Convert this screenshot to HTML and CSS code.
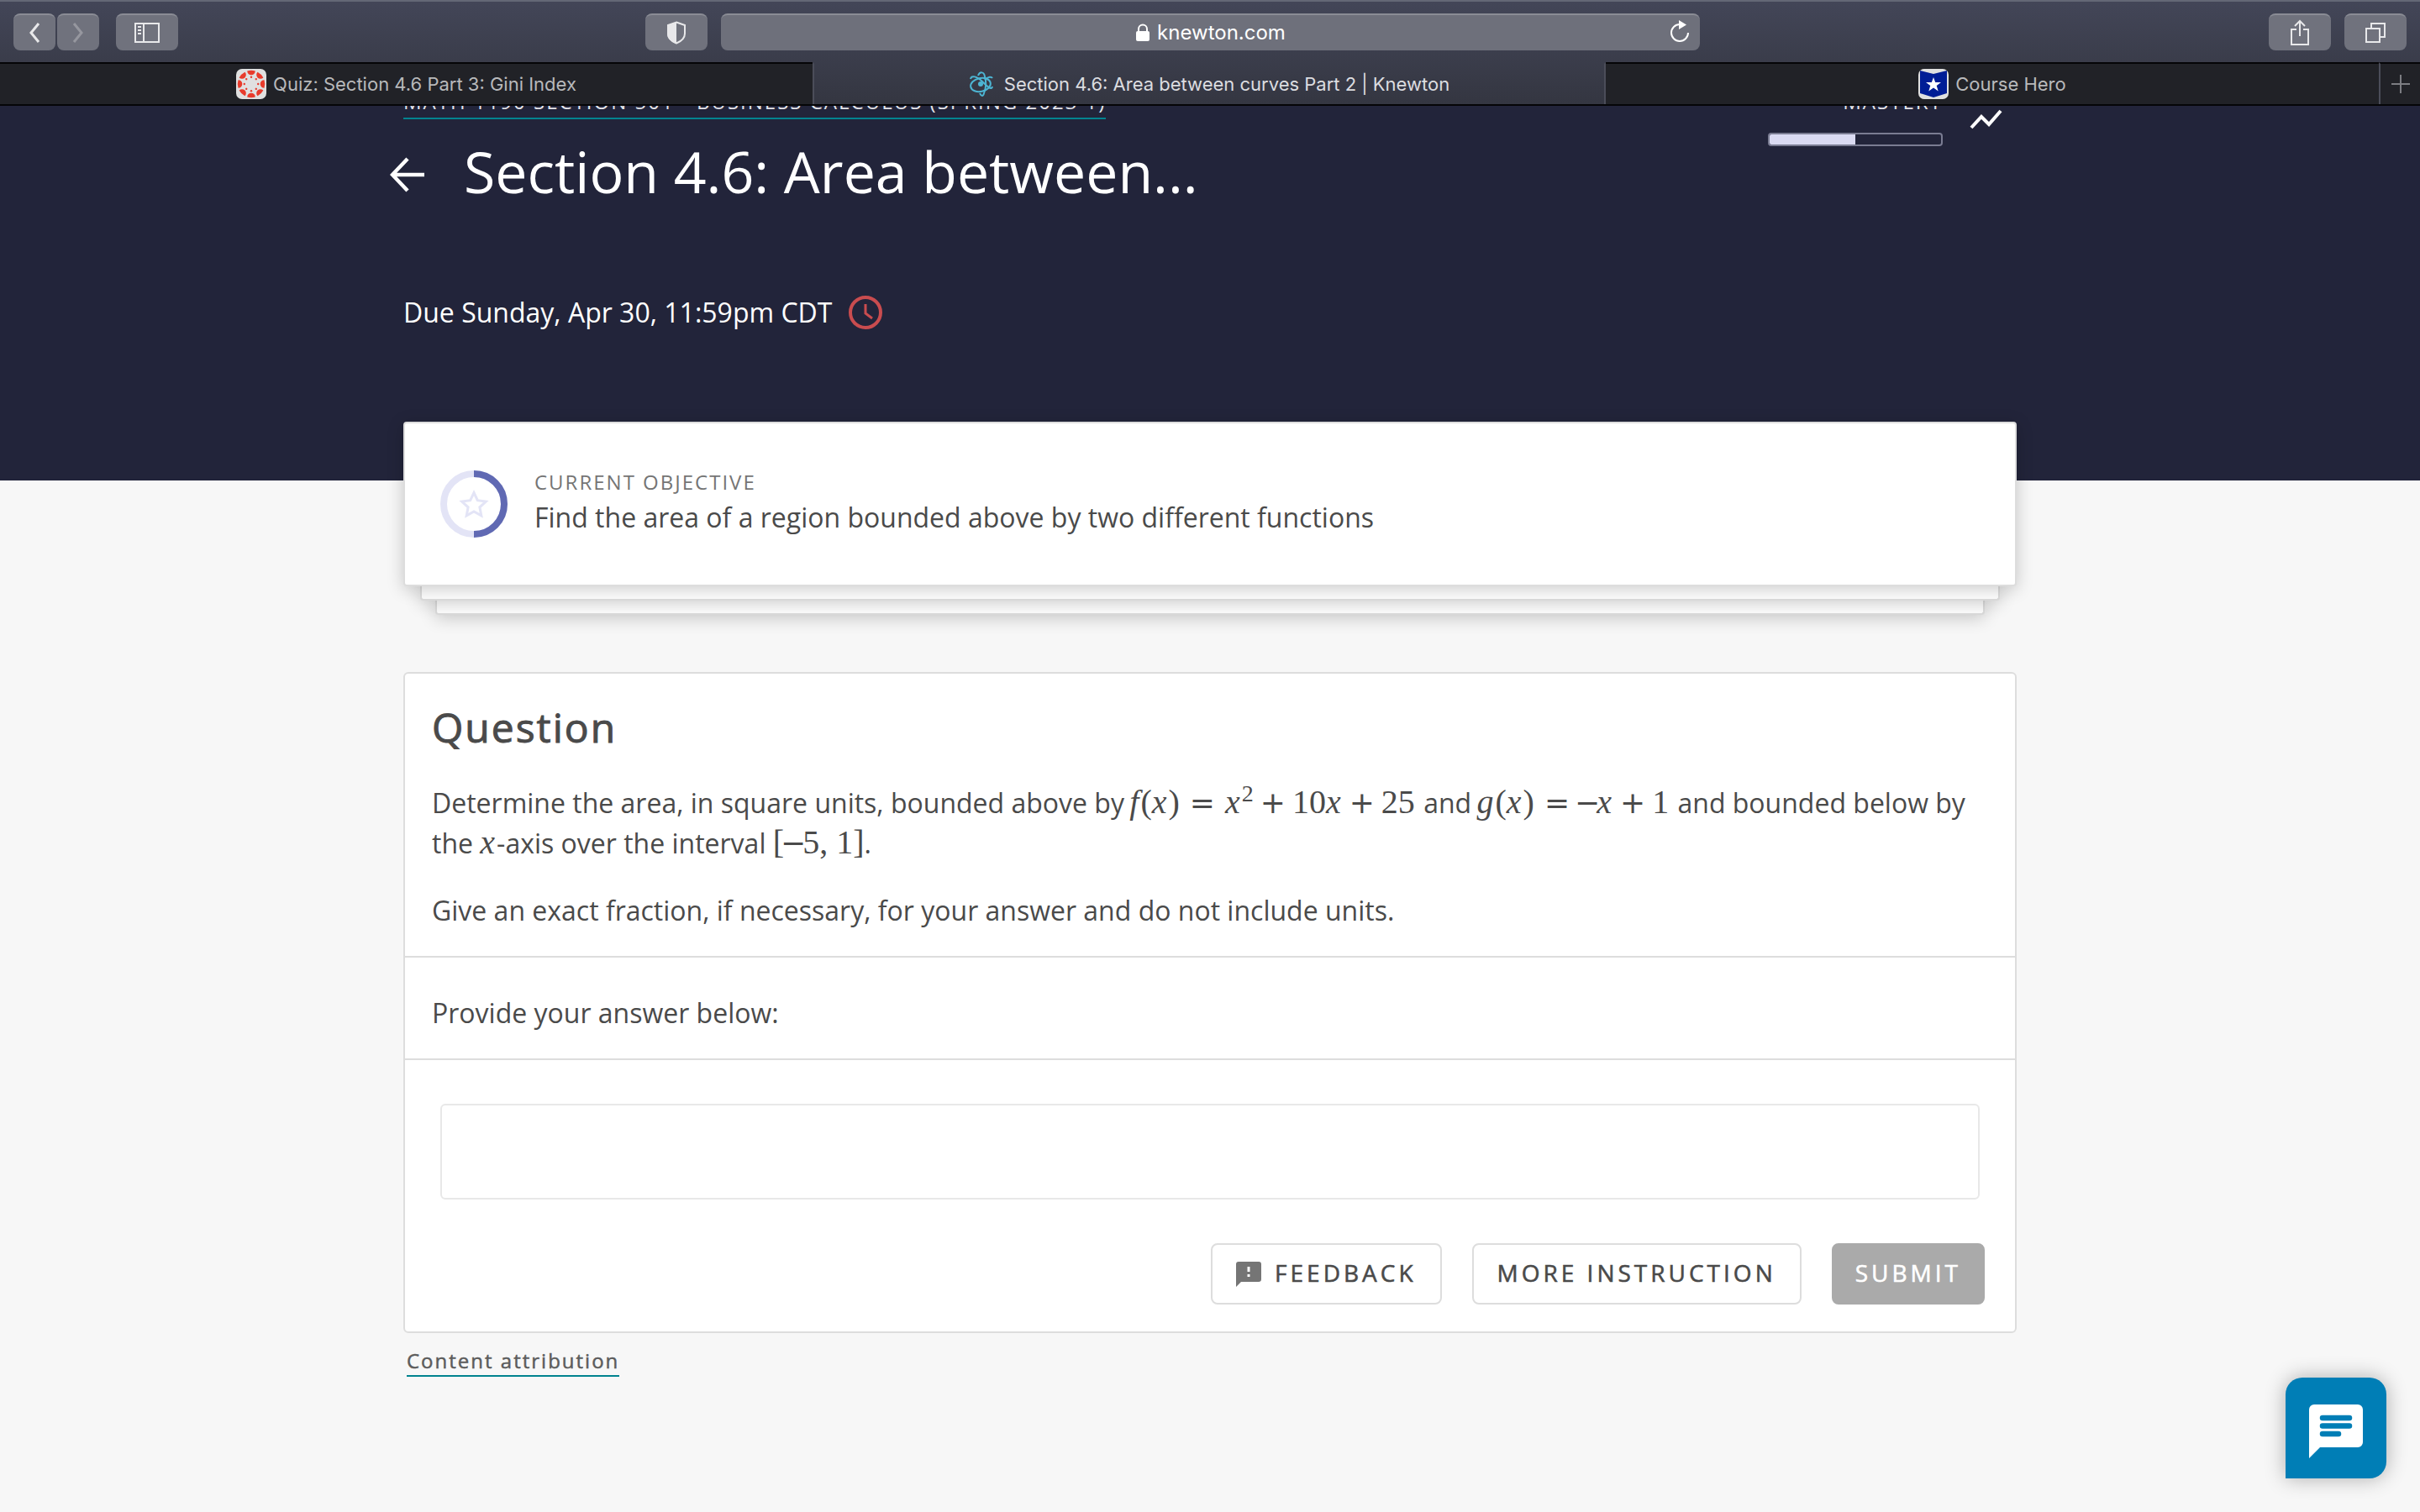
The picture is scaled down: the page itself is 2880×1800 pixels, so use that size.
FILE: index.html
```html
<!DOCTYPE html>
<html lang="en">
<head>
<meta charset="utf-8">
<title>Section 4.6: Area between curves Part 2 | Knewton</title>
<link rel="stylesheet" href="styles.css">
</head>
<body>
<div class="browser">
  <div class="toolbar">
    <div class="tools tools-left">
      <div class="nav-pair">
        <button class="tool tool-narrow" aria-label="Back"><svg width="14" height="26" viewBox="0 0 14 26"><path d="M12 2 3 13l9 11" class="line line-3"/></svg></button>
        <button class="tool tool-narrow tool-off" aria-label="Forward"><svg width="14" height="26" viewBox="0 0 14 26"><path d="M2 2l9 11-9 11" class="line line-3"/></svg></button>
      </div>
      <button class="tool" aria-label="Sidebar"><svg width="32" height="26" viewBox="0 0 32 26"><path d="M2 2h28v22H2zM12 2v22M5 6h4M5 10h4M5 14h4" class="line"/></svg></button>
    </div>
    <div class="tools tools-center">
      <button class="tool" aria-label="Privacy report"><svg width="24" height="28" viewBox="0 0 24 28"><path d="M12 1.500 22 5v10c0 5-4 9-10 11.500C6 24 2 20 2 15V5z" class="line"/><path d="M12 1 1 5v10c0 6 5 10 11 12z" class="solid"/></svg></button>
      <div class="address">
        <svg width="18" height="22" viewBox="0 0 18 22"><path d="M4 10V6.500a5 5 0 0 1 10 0V10" class="line"/><rect x="1" y="9" width="16" height="12" rx="2" class="solid"/></svg>
        <span>knewton.com</span>
        <button class="reload" aria-label="Reload"><svg width="24" height="28" viewBox="0 0 24 28"><path d="M12 5a10 10 0 1 0 10 10" class="line"/><path d="M11 0l9 5.500L11 11z" class="solid"/></svg></button>
      </div>
    </div>
    <div class="tools tools-right">
      <button class="tool" aria-label="Share"><svg width="24" height="32" viewBox="0 0 24 32"><path d="M8 12H2v18h20V12h-6M12 20V3M6 8l6-6 6 6" class="line"/></svg></button>
      <button class="tool" aria-label="Show tabs"><svg width="26" height="26" viewBox="0 0 26 26"><path d="M2 8h16v16H2zM8 8V2h16v16h-6" class="line"/></svg></button>
    </div>
  </div>
  <nav class="tabs" aria-label="Open tabs">
    <a class="tab" href="#quiz">
      <svg width="36" height="36" viewBox="0 0 36 36"><rect width="36" height="36" rx="7" fill="#e0e0e0"/><g fill="#e83b2c"><g id="petal"><path d="M13.200 2.500a16 16 0 0 1 9.600 0 4.800 4.800 0 0 1-9.600 0z"/><circle cx="18" cy="9.800" r="1.200"/></g><use href="#petal" transform="rotate(45 18 18)"/><use href="#petal" transform="rotate(90 18 18)"/><use href="#petal" transform="rotate(135 18 18)"/><use href="#petal" transform="rotate(180 18 18)"/><use href="#petal" transform="rotate(225 18 18)"/><use href="#petal" transform="rotate(270 18 18)"/><use href="#petal" transform="rotate(315 18 18)"/></g></svg>
      <span>Quiz: Section 4.6 Part 3: Gini Index</span>
    </a>
    <a class="tab tab-active" href="#section">
      <svg width="30" height="30" viewBox="0 0 30 30"><g fill="none" stroke="#4db5d3" stroke-width="2"><ellipse cx="14" cy="16" rx="12" ry="8" transform="rotate(-12 14 16)"/><path d="M11 5c2-5 7-5 8 1 2 7 1 15-1 20-1 4-3 4-5 0"/><path d="M2 9c1-5 8-3 14 3s11 11 12 6M28 8c-1-2-5-2-9 2"/></g><circle cx="14" cy="15" r="3" fill="#4db5d3"/></svg>
      <span>Section 4.6: Area between curves Part 2 | Knewton</span>
    </a>
    <a class="tab" href="#hero">
      <svg width="36" height="36" viewBox="0 0 36 36"><rect width="36" height="36" rx="7" fill="#e0e0e0"/><path d="M2 2l16 4 16-4v27l-16 5-16-5z" fill="#001d96"/><path d="M18 10l2.200 6H27l-5.300 4 2 6.500L18 22.500l-5.700 4 2-6.500L9 16h6.800z" fill="#fff"/></svg>
      <span>Course Hero</span>
    </a>
    <button class="new-tab" aria-label="New tab"><svg width="24" height="24" viewBox="0 0 24 24"><path d="M12 1v22M1 12h22" class="line"/></svg></button>
  </nav>
</div>

<div class="page">
  <header class="hero">
    <div class="column">
      <div class="hero-top">
        <a class="crumb" href="#course">MATH 1190 SECTION 501 - BUSINESS CALCULUS (SPRING 2023 1)</a>
        <div class="mastery">
          <div class="mastery-meter">
            <span class="mastery-label">MASTERY</span>
            <div class="bar"><div class="bar-fill" style="width:50%"></div></div>
          </div>
          <svg class="trend" width="40" height="26" viewBox="0 0 40 26"><path d="M2 23 14 10l9 9L37 3" fill="none" stroke="#fff" stroke-width="4"/></svg>
        </div>
      </div>
      <div class="title-row">
        <a class="back" href="#back" aria-label="Back to course"><svg width="42" height="42" viewBox="0 0 42 42"><path d="M41 21H4M21 2 3 21l18 19" fill="none" stroke="#fff" stroke-width="4.500"/></svg></a>
        <h1>Section 4.6: Area between...</h1>
      </div>
      <p class="due">Due Sunday, Apr 30, 11:59pm CDT
        <svg width="40" height="40" viewBox="0 0 40 40"><g fill="none" stroke="#c94c4f" stroke-width="4"><circle cx="20" cy="20" r="18"/><path d="M20 10v11l8 6" stroke-width="3"/></g></svg>
      </p>
    </div>
  </header>

  <main class="column">
    <section class="stack">
      <div class="objective">
        <svg width="80" height="80" viewBox="0 0 80 80"><g fill="none"><circle cx="40" cy="40" r="36" stroke="#e3e4f6" stroke-width="8"/><path d="M40 4a36 36 0 0 1 0 72" stroke="#6069b3" stroke-width="8"/><path d="M40 26.500l4.300 9.200 10 1.300-7.400 6.900 1.900 10-8.800-4.900-8.800 4.900 1.900-10-7.400-6.900 10-1.300z" stroke="#e3e4f6" stroke-width="3"/></g></svg>
        <div class="objective-text">
          <p class="eyebrow">CURRENT OBJECTIVE</p>
          <p>Find the area of a region bounded above by two different functions</p>
        </div>
      </div>
      <div class="sheet sheet-1"></div>
      <div class="sheet sheet-2"></div>
    </section>

    <section class="question">
      <div class="prompt">
        <h2>Question</h2>
        <p>Determine the area, in square units, bounded above by <span class="math eq"><i>f</i>(<i>x</i>)<b class="rel">=</b><i>x</i><sup>2</sup><b>+</b>10<i>x</i><b>+</b>25</span> and <span class="math eq"><i>g</i>(<i>x</i>)<b class="rel">=</b><b class="neg">−</b><i>x</i><b>+</b>1</span> and bounded below by the <span class="math"><i>x</i></span>-axis over the interval <span class="math">[<b class="neg">−</b>5, 1]</span>.</p>
        <p>Give an exact fraction, if necessary, for your answer and do not include units.</p>
      </div>
      <label class="answer-label" for="answer">Provide your answer below:</label>
      <div class="response">
        <input class="answer" id="answer" type="text">
        <div class="actions">
          <button class="btn"><svg width="30" height="30" viewBox="0 0 30 30"><path fill="#757575" fill-rule="evenodd" d="M3 0h24a3 3 0 0 1 3 3v18a3 3 0 0 1-3 3H6l-6 6V3a3 3 0 0 1 3-3zm10.500 6v6h3V6zm0 9v3h3v-3z"/></svg>FEEDBACK</button>
          <button class="btn">MORE INSTRUCTION</button>
          <button class="btn btn-submit" disabled>SUBMIT</button>
        </div>
      </div>
    </section>
    <a class="attribution" href="#attribution">Content attribution</a>
  </main>
</div>
<button class="chat" aria-label="Open chat"><svg width="64" height="64" viewBox="0 0 64 64"><path fill="#fff" d="M6 0h52a6 6 0 0 1 6 6v39a6 6 0 0 1-6 6H13L0 64V6a6 6 0 0 1 6-6z"/><path d="M16 16h32M16 25.500h32M16 35h19" stroke="#007eb6" stroke-width="6.500" stroke-linecap="round"/></svg></button>
</body>
</html>
```
FILE: styles.css
```css
* { box-sizing: border-box; }
body {
  margin: 0;
  min-height: 100vh;
  display: flex;
  flex-direction: column;
  background: #f7f7f7;
  color: #4a4a4a;
  font: 32px/48px "Open Sans", "Noto Sans", sans-serif;
}
h1, h2, p { margin: 0; }
a { color: inherit; text-decoration: none; }
button { font: inherit; color: inherit; border: 0; padding: 0; margin: 0; }
svg { display: block; flex: none; }
.line { fill: none; stroke: currentColor; stroke-width: 2; }
.line-3 { stroke-width: 3; }
.solid { fill: currentColor; }

/* Browser chrome */
.browser {
  font: 22px/28px Inter, "Liberation Sans", sans-serif;
  background: linear-gradient(#434658, #343641);
  border-bottom: 2px solid #050507;
}
.toolbar {
  display: grid;
  grid-template-columns: 752fr 1255fr 841fr;
  padding: 14px 16px;
  border-top: 2px solid #646876;
  color: #e8e8ea;
}
.tools { display: flex; align-items: center; gap: 16px; }
.tools-left { gap: 20px; }
.tools-right { justify-content: flex-end; }
.nav-pair { display: flex; gap: 2px; }
.tool {
  display: flex;
  align-items: center;
  justify-content: center;
  width: 74px;
  height: 44px;
  border-radius: 8px;
  background: #70727d;
  border-top: 2px solid #8a8c95;
}
.tool-narrow { width: 50px; }
.tool-off { color: #96979f; }
.address {
  flex: 1;
  display: flex;
  align-items: center;
  justify-content: center;
  gap: 8px;
  height: 44px;
  position: relative;
  border-radius: 8px;
  background: #6e707b;
  border-top: 2px solid #8a8c95;
  color: #fff;
  font-size: 24px;
}
.reload { position: absolute; right: 12px; top: 6px; background: none; }
.tabs {
  display: grid;
  grid-template-columns: 967fr 944fr 920fr 49px;
  height: 50px;
}
.tab, .new-tab {
  display: flex;
  align-items: center;
  justify-content: center;
  gap: 8px;
  border-top: 2px solid #050507;
  background: #212227;
  color: #b8b9bb;
}
.tab-active {
  gap: 12px;
  background: none;
  border-top-color: transparent;
  border-inline: 2px solid #4b4d59;
  color: #dcdde0;
}
.new-tab { border-left: 2px solid #4b4d59; color: #7c7d82; }

/* Page */
.page { flex: 1; overflow: hidden; padding-bottom: 100px; }
.column { width: min(1920px, 100% - 96px); margin: 0 auto; }
.hero { margin-top: -24px; height: 470px; background: #22243a; color: #fff; }
.hero-top { display: flex; justify-content: space-between; align-items: flex-start; }
.crumb, .mastery-label { font-size: 24px; line-height: 38px; letter-spacing: 2px; color: #e4e4ea; }
.crumb { border-bottom: 2px solid #00838f; }
.mastery { display: flex; gap: 32px; align-items: flex-start; padding-right: 16px; }
.mastery-meter { display: flex; flex-direction: column; align-items: flex-end; gap: 18px; }
.bar { width: 208px; height: 16px; border: 2px solid #7a7c92; border-radius: 4px; overflow: hidden; }
.bar-fill { height: 100%; background: #dadaf2; }
.trend { margin-top: 27px; }
.title-row { display: flex; align-items: center; gap: 46px; margin: -18px 0 0 -16px; }
.back { padding-top: 8px; }
h1 { font-size: 68px; line-height: 96px; font-weight: 400; }
.due { display: flex; align-items: center; gap: 20px; margin-top: 96px; }

.stack { margin-top: -70px; }
.objective, .sheet {
  position: relative;
  background: #fff;
  border: 2px solid #ddd;
  border-radius: 4px;
  box-shadow: 0 4px 20px rgba(0, 0, 0, .2);
}
.objective { z-index: 2; display: flex; align-items: center; gap: 32px; height: 196px; padding: 0 42px; }
.objective-text { padding-bottom: 4px; }
.eyebrow { font-size: 24px; line-height: 36px; letter-spacing: 2px; color: #757575; }
.sheet { height: 17px; border-top: 0; border-radius: 0 0 4px 4px; }
.sheet-1 { z-index: 1; margin: 0 20px; }
.sheet-2 { margin: 0 38px; }

.question { margin-top: 68px; background: #fff; border: 2px solid #ddd; border-radius: 6px; }
.prompt { padding: 30px 32px; border-bottom: 2px solid #ddd; }
h2, .btn, .attribution { font-weight: 400; -webkit-text-stroke: .02em currentColor; }
h2 { font-size: 48px; line-height: 68px; letter-spacing: 2px; margin-bottom: 32px; }
.prompt p + p { margin-top: 32px; }

/* Formulas: wide operators around serif letters and digits */
.math { font: 40px/40px "Liberation Serif", serif; white-space: nowrap; }
.eq { margin: 0 2px 0 -2px; }
.math i { margin-right: 2px; }
.math b { font: 36px/1px "DejaVu Sans", sans-serif; margin: 0 8px; }
.math .rel { margin: 0 12px; }
.math .neg { margin: 0 -4px; }
.math .rel + .neg { margin-left: -6px; }
.math sup { font-size: 28px; line-height: 0; }

.answer-label { display: block; padding: 42px 32px 30px; border-bottom: 2px solid #ddd; }
.response { padding: 52px 36px 32px 42px; }
.answer {
  display: block;
  width: calc(100% - 6px);
  height: 114px;
  padding: 0 24px;
  font: inherit;
  border: 2px solid #e8e8e8;
  border-radius: 6px;
}
.actions { display: flex; flex-wrap: wrap; justify-content: flex-end; gap: 36px; margin-top: 52px; }
.btn {
  display: flex;
  align-items: center;
  gap: 16px;
  height: 73px;
  padding: 0 28px 3px;
  background: #fff;
  border: 2px solid #ddd;
  border-radius: 8px;
  font-size: 28px;
  letter-spacing: 4px;
}
.btn svg { margin-top: 3px; }
.btn-submit { background: #aaa; border-color: #aaa; color: #fff; padding: 0 26px 3px; }
.attribution {
  display: inline-block;
  margin: 16px 4px 0;
  font-size: 24px;
  line-height: 34px;
  letter-spacing: 2px;
  color: #5c5c5c;
  border-bottom: 2px solid #00838f;
}
.chat {
  position: fixed;
  right: 40px;
  bottom: 40px;
  width: 120px;
  height: 120px;
  padding: 8px 0 0 28px;
  background: #007eb6;
  border-radius: 20px 20px 20px 0;
  box-shadow: 0 0 24px rgba(0, 0, 0, .3);
}
```
